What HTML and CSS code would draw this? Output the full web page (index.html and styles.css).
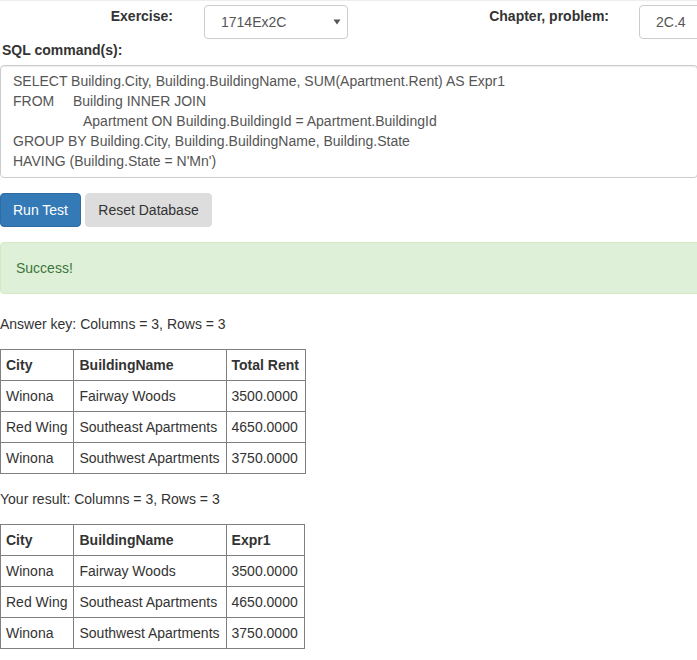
FILE: index.html
```html
<!DOCTYPE html>
<html>
<head>
<meta charset="utf-8">
<link rel="stylesheet" href="styles.css">
</head>
<body>
<div class="page">
  <div class="top-row">
    <label class="lbl lbl-ex">Exercise:</label>
    <div class="select">
      <span>1714Ex2C</span>
      <svg class="caret" width="8" height="6" viewBox="0 0 8 6"><path d="M0.5 0.5 L7.5 0.5 L4 5.5 Z" fill="#555"/></svg>
    </div>
    <label class="lbl lbl-ch">Chapter, problem:</label>
    <div class="input">2C.4</div>
  </div>
  <label class="lbl lbl-sql">SQL command(s):</label>
  <div class="sql">
    <div>SELECT Building.City, Building.BuildingName, SUM(Apartment.Rent) AS Expr1</div>
    <div><span class="kw">FROM</span>Building INNER JOIN</div>
    <div class="indent">Apartment ON Building.BuildingId = Apartment.BuildingId</div>
    <div>GROUP BY Building.City, Building.BuildingName, Building.State</div>
    <div>HAVING (Building.State = N'Mn')</div>
  </div>
  <div class="buttons">
    <button class="btn btn-primary">Run Test</button>
    <button class="btn btn-gray">Reset Database</button>
  </div>
  <div class="alert">Success!</div>
  <p class="caption first">Answer key: Columns = 3, Rows = 3</p>
  <table class="grid">
    <tr><th>City</th><th>BuildingName</th><th>Total Rent</th></tr>
    <tr><td>Winona</td><td>Fairway Woods</td><td>3500.0000</td></tr>
    <tr><td>Red Wing</td><td>Southeast Apartments</td><td>4650.0000</td></tr>
    <tr><td>Winona</td><td>Southwest Apartments</td><td>3750.0000</td></tr>
  </table>
  <p class="caption">Your result: Columns = 3, Rows = 3</p>
  <table class="grid">
    <tr><th>City</th><th>BuildingName</th><th>Expr1</th></tr>
    <tr><td>Winona</td><td>Fairway Woods</td><td>3500.0000</td></tr>
    <tr><td>Red Wing</td><td>Southeast Apartments</td><td>4650.0000</td></tr>
    <tr><td>Winona</td><td>Southwest Apartments</td><td>3750.0000</td></tr>
  </table>
</div>
</body>
</html>
```
FILE: styles.css
```css
html, body {
  margin: 0;
  padding: 0;
  overflow: hidden;
  background: #fff;
}
body {
  font-family: "Liberation Sans", Arial, sans-serif;
  font-size: 14px;
  line-height: 20px;
  color: #333;
}
.page {
  width: 697px;
  overflow: hidden;
  border-top: 1px solid #eee;
}
.top-row {
  display: flex;
  align-items: flex-start;
  padding-top: 4px;
  height: 34px;
  overflow: hidden;
}
.top-row > * {
  flex-shrink: 0;
}
.lbl {
  font-weight: bold;
  display: block;
}
.lbl-ex {
  width: 173px;
  text-align: right;
  padding-top: 1px;
}
.select {
  margin-left: 31px;
  width: 144px;
  height: 34px;
  box-sizing: border-box;
  border: 1px solid #ccc;
  border-radius: 4px;
  display: flex;
  align-items: center;
  justify-content: space-between;
  padding: 0 6px 0 16px;
  color: #555;
}
.caret {
  display: block;
}
.lbl-ch {
  width: 261px;
  text-align: right;
  padding-top: 1px;
}
.input {
  margin-left: 30px;
  width: 110px;
  height: 34px;
  box-sizing: border-box;
  border: 1px solid #ccc;
  border-radius: 4px;
  padding: 6px 16px;
  color: #555;
}
.lbl-sql {
  margin: 1px 0 5px 2px;
}
.sql {
  width: 698px;
  box-sizing: border-box;
  border: 1px solid #ccc;
  border-radius: 4px;
  padding: 5px 12px 6px 12px;
  color: #555;
  white-space: nowrap;
  box-shadow: inset 0 1px 1px rgba(0,0,0,.075);
}
.kw {
  display: inline-block;
  width: 60px;
}
.indent {
  padding-left: 70px;
}
.buttons {
  display: flex;
  gap: 4px;
  margin-top: 15px;
}
.btn {
  font-family: inherit;
  font-size: 14px;
  line-height: 20px;
  height: 34px;
  padding: 6px 12px;
  border-radius: 4px;
  border: 1px solid transparent;
  margin: 0;
}
.btn-primary {
  background: #337ab7;
  border-color: #2e6da4;
  color: #fff;
  width: 81px;
}
.btn-gray {
  background: #ddd;
  border-color: #ddd;
  color: #333;
  width: 127px;
}
.alert {
  margin-top: 15px;
  width: 704px;
  box-sizing: border-box;
  padding: 15px;
  background: #dff0d8;
  border: 1px solid #d6e9c6;
  border-radius: 4px;
  color: #3c763d;
}
.caption {
  margin: 15px 0 15px 0;
}
.caption.first {
  margin-top: 20px;
}
.grid {
  border-collapse: collapse;
}
.grid th, .grid td {
  border: 1px solid #808080;
  padding: 5px 6px 5px 5px;
  text-align: left;
  white-space: nowrap;
  height: 20px;
}
.grid th {
  font-weight: bold;
}
```
